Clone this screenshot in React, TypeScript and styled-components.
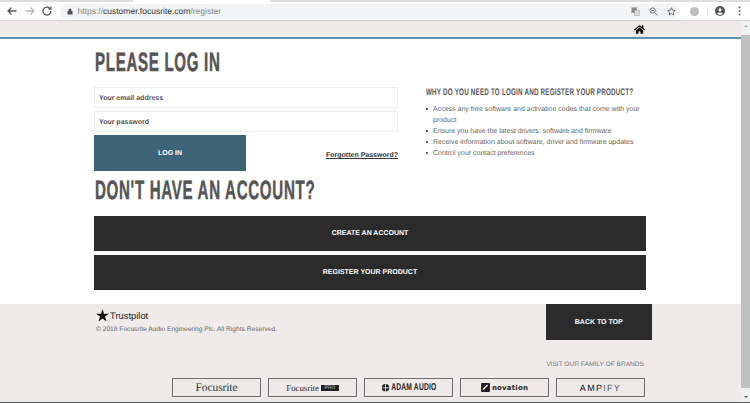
import styled, { createGlobalStyle } from "styled-components";
import { FaHome } from "react-icons/fa";

const Global = createGlobalStyle`
  html, body {
    margin: 0;
    padding: 0;
    overflow: hidden;
    background: #fff;
  }
`;

const Screen = styled.div`
  width: 750px;
  height: 403px;
  box-sizing: border-box;
  border-bottom: 1px solid #555;
  display: flex;
  flex-direction: column;
  overflow: hidden;
  font-family: "Liberation Sans", Arial, sans-serif;
  text-rendering: geometricPrecision;
  color: #555;
`;

const BrowserBar = styled.div`
  height: 18px;
  flex: none;
  position: relative;
  border-top: 2px solid #ddd;
  border-bottom: 1px solid #d6d3d3;
  background: #fff;
  display: flex;
  align-items: center;
  padding-left: 7px;
  &::before {
    content: "";
    position: absolute;
    left: 133px;
    top: -2px;
    width: 137px;
    height: 2px;
    background: #fff;
  }
`;

const NavIcon = styled.svg<{ $dim?: boolean }>`
  width: 10px;
  height: 10px;
  flex: none;
  margin-right: 7.5px;
  stroke: ${(p) => (p.$dim ? "#b5b5b5" : "#555")};
  fill: none;
  stroke-width: 1.3;
`;

const UrlPill = styled.div`
  flex: none;
  width: 620px;
  height: 15px;
  border-radius: 8px;
  background: #f1f3f4;
  display: flex;
  align-items: center;
  padding: 0 4px 0 7px;
  box-sizing: border-box;
  font-size: 8.5px;
  color: #333;
`;

const UrlText = styled.span`
  flex: 1;
  margin-left: 5px;
  span {
    color: #888;
  }
`;

const PillIcon = styled.svg`
  width: 9px;
  height: 9px;
  flex: none;
  margin-left: 9px;
  fill: none;
  stroke: #666;
  stroke-width: 1;
`;

const ToolIcons = styled.div`
  flex: 1;
  display: flex;
  align-items: center;
  padding-left: 10px;
`;

const Globe = styled.div`
  width: 9px;
  height: 9px;
  border-radius: 50%;
  background: #bdbdbd;
`;

const Separator = styled.div`
  width: 1px;
  height: 9px;
  margin-left: 8px;
  background: #e0e0e0;
`;

const Avatar = styled.svg`
  width: 10px;
  height: 10px;
  margin-left: 7px;
`;

const MenuDots = styled.svg`
  width: 3px;
  height: 10px;
  margin-left: 13px;
`;

const Body = styled.div`
  flex: 1;
  display: flex;
  min-height: 0;
`;

const Page = styled.div`
  flex: 1;
  display: flex;
  flex-direction: column;
  min-width: 0;
`;

const Scrollbar = styled.div`
  width: 9px;
  flex: none;
  background: #f1f1f1;
  display: flex;
  flex-direction: column;
  align-items: center;
  justify-content: space-between;
  padding: 4px 0 4px;
  box-sizing: border-box;
`;

const ScrollThumb = styled.div`
  width: 100%;
  height: 353px;
  background: #c1c1c1;
`;

const Arrow = styled.div<{ $down?: boolean }>`
  width: 0;
  height: 0;
  border-left: 2px solid transparent;
  border-right: 2px solid transparent;
  ${(p) => (p.$down ? "border-top: 2px solid #555;" : "border-bottom: 2px solid #aaa;")}
`;

const TopStrip = styled.div`
  height: 16px;
  flex: none;
  background: #efebea;
  border-bottom: 2px solid #5b93ad;
  display: flex;
  align-items: center;
  justify-content: flex-end;
  padding-right: 96px;
  color: #111;
`;

const Main = styled.main`
  flex: none;
  height: 265px;
  padding: 10px 95px 0 94px;
  box-sizing: border-box;
`;

const Title = styled.h1`
  margin: 0 0 0 1px;
  font-family: "Liberation Sans", Arial, sans-serif;
  font-size: 26.5px;
  line-height: 26px;
  font-weight: 700;
  letter-spacing: 1.2px;
  color: #555;
  white-space: nowrap;
  transform: scaleX(0.57);
  transform-origin: left center;
  -webkit-text-stroke: 0.5px #555;
`;

const LoginRow = styled.div`
  display: flex;
  margin-top: 12px;
`;

const LoginForm = styled.div`
  width: 304px;
  flex: none;
  display: flex;
  flex-direction: column;
  gap: 3px;
`;

const Field = styled.div`
  height: 21px;
  box-sizing: border-box;
  border: 1px solid #f0eeee;
  padding: 1px 0 0 4px;
  display: flex;
  align-items: center;
  font-size: 7px;
  font-weight: 700;
  color: #555;
`;

const LoginActions = styled.div`
  display: flex;
  justify-content: space-between;
  align-items: flex-end;
`;

const LoginButton = styled.div`
  width: 152px;
  height: 36px;
  background: #3e6478;
  color: #fff;
  font-size: 7px;
  font-weight: 700;
  display: flex;
  align-items: center;
  justify-content: center;
  box-sizing: border-box;
`;

const ForgotLink = styled.a`
  font-size: 7px;
  font-weight: 700;
  color: #333;
  text-decoration: underline;
  margin-bottom: 12px;
`;

const WhyBox = styled.section`
  flex: 1;
  padding: 0 0 0 28px;
  min-width: 0;
`;

const WhyTitle = styled.h3`
  margin: 0;
  font-family: "Liberation Sans", Arial, sans-serif;
  font-size: 9.5px;
  line-height: 12px;
  font-weight: 700;
  letter-spacing: 0.3px;
  color: #555;
  white-space: nowrap;
  transform: scaleX(0.66);
  transform-origin: left center;
`;

const WhyList = styled.ul`
  margin: 5px 0 0;
  padding: 0;
  list-style: none;
  font-size: 7px;
  line-height: 11px;
  color: #666;
`;

const WhyItem = styled.li`
  position: relative;
  padding-left: 7px;
  &::before {
    content: "";
    position: absolute;
    left: 0;
    top: 4px;
    width: 2px;
    height: 2px;
    background: #666;
  }
`;

const SecondTitle = styled(Title)`
  margin-top: 6px;
`;

const WideButton = styled.div`
  width: 552px;
  height: 35px;
  margin-top: 4px;
  background: #2b2b2b;
  color: #fff;
  font-size: 7px;
  font-weight: 700;
  display: flex;
  align-items: center;
  justify-content: center;
`;

const FirstWide = styled(WideButton)`
  margin-top: 13px;
`;

const Footer = styled.footer`
  flex: 1;
  background: #efebea;
  padding-left: 96px;
`;

const FooterTop = styled.div`
  display: flex;
  justify-content: space-between;
  padding-right: 89.5px;
`;

const Legal = styled.div`
  padding-top: 4px;
`;

const Trustpilot = styled.div`
  display: flex;
  align-items: center;
  gap: 1px;
  font-size: 9.4px;
  color: #222;
  height: 14px;
`;

const Copyright = styled.div`
  margin-top: 4px;
  font-size: 6.65px;
  color: #666;
`;

const BackToTop = styled.div`
  width: 105.5px;
  height: 36px;
  padding-top: 1px;
  box-sizing: border-box;
  background: #2b2b2b;
  color: #fff;
  font-size: 7px;
  font-weight: 700;
  display: flex;
  align-items: center;
  justify-content: center;
`;

const VisitLine = styled.div`
  margin-top: 21px;
  padding-right: 97px;
  text-align: right;
  font-size: 6.6px;
  line-height: 8px;
  color: #777;
`;

const BrandRow = styled.div`
  display: flex;
  gap: 7px;
  margin: 9px 0 0 76px;
`;

const BrandBox = styled.div`
  width: 89px;
  height: 19px;
  box-sizing: border-box;
  border: 1px solid #6e6e6e;
  display: flex;
  align-items: center;
  justify-content: center;
  gap: 2px;
  color: #333;
`;

const SerifLogo = styled.span<{ $size: number }>`
  font-family: "Liberation Serif", serif;
  font-size: ${(p) => p.$size}px;
  letter-spacing: -0.1px;
`;

const ProTag = styled.span`
  background: #222;
  color: #bbb;
  font-size: 5px;
  line-height: 6px;
  padding: 0 3.5px;
  font-family: "Liberation Sans", sans-serif;
`;

const AdamLogo = styled.span`
  display: inline-block;
  font-weight: 700;
  font-size: 10px;
  letter-spacing: 0.3px;
  color: #222;
  white-space: nowrap;
  margin: 0 -11.5px;
  transform: scaleX(0.67);
`;

const NovationLogo = styled.span`
  font-family: "DejaVu Sans", sans-serif;
  font-weight: 700;
  font-size: 7px;
  letter-spacing: 0.2px;
  color: #222;
`;

const AmpifyLogo = styled.span`
  font-size: 9px;
  letter-spacing: 1.3px;
  color: #555;
  b {
    color: #111;
    font-weight: 400;
  }
`;

export default function App() {
  return (
    <>
      <Global />
      <Screen>
        <BrowserBar>
          <NavIcon viewBox="0 0 10 10">
            <path d="M9.5 5H1M4.5 1.5 1 5l3.5 3.5" />
          </NavIcon>
          <NavIcon $dim viewBox="0 0 10 10">
            <path d="M.5 5H9M5.5 1.5 9 5 5.5 8.5" />
          </NavIcon>
          <NavIcon viewBox="0 0 10 10">
            <path d="M9 5a4 4 0 1 1-1.2-2.8M9 .5V3H6.5" />
          </NavIcon>
          <UrlPill>
            <svg width="6" height="7" viewBox="0 0 6 7">
              <path d="M1.5 3V2a1.5 1.5 0 0 1 3 0v1H5.5v3.5h-5V3z" fill="#555" />
            </svg>
            <UrlText>
              <span>https://</span>customer.focusrite.com<span>/register</span>
            </UrlText>
            <PillIcon viewBox="0 0 10 10">
              <rect x="0.5" y="0.5" width="6" height="6" fill="#888" stroke="none" />
              <rect x="4" y="3.5" width="5.5" height="6" fill="#ddd" stroke="#999" strokeWidth="0.5" />
            </PillIcon>
            <PillIcon viewBox="0 0 10 10">
              <circle cx="4" cy="4" r="3" />
              <path d="M6.3 6.3 9.5 9.5M2.5 4h3" />
            </PillIcon>
            <PillIcon viewBox="0 0 10 10">
              <path d="M5 .8 6.2 3.6l3 .3-2.3 2 .7 3L5 7.3 2.4 8.9l.7-3-2.3-2 3-.3z" />
            </PillIcon>
          </UrlPill>
          <ToolIcons>
            <Globe />
            <Separator />
            <Avatar viewBox="0 0 10 10">
              <circle cx="5" cy="5" r="5" fill="#555" />
              <circle cx="5" cy="3.8" r="1.6" fill="#fff" />
              <path d="M2 7.6c1-1.5 5-1.5 6 0a4 4 0 0 1-6 0z" fill="#fff" />
            </Avatar>
            <MenuDots viewBox="0 0 3 10">
              <circle cx="1.5" cy="1.5" r="1" fill="#666" />
              <circle cx="1.5" cy="5" r="1" fill="#666" />
              <circle cx="1.5" cy="8.5" r="1" fill="#666" />
            </MenuDots>
          </ToolIcons>
        </BrowserBar>
        <Body>
          <Page>
            <TopStrip>
              <FaHome size={11} />
            </TopStrip>
            <Main>
              <Title>PLEASE LOG IN</Title>
              <LoginRow>
                <LoginForm>
                  <Field>Your email address</Field>
                  <Field>Your password</Field>
                  <LoginActions>
                    <LoginButton>LOG IN</LoginButton>
                    <ForgotLink>Forgotten Password?</ForgotLink>
                  </LoginActions>
                </LoginForm>
                <WhyBox>
                  <WhyTitle>WHY DO YOU NEED TO LOGIN AND REGISTER YOUR PRODUCT?</WhyTitle>
                  <WhyList>
                    <WhyItem>Access any free software and activation codes that come with your product</WhyItem>
                    <WhyItem>Ensure you have the latest drivers, software and firmware</WhyItem>
                    <WhyItem>Receive information about software, driver and firmware updates</WhyItem>
                    <WhyItem>Control your contact preferences</WhyItem>
                  </WhyList>
                </WhyBox>
              </LoginRow>
              <SecondTitle>DON'T HAVE AN ACCOUNT?</SecondTitle>
              <FirstWide>CREATE AN ACCOUNT</FirstWide>
              <WideButton>REGISTER YOUR PRODUCT</WideButton>
            </Main>
            <Footer>
              <FooterTop>
                <Legal>
                  <Trustpilot>
                    <svg width="13" height="13" viewBox="0 0 13 13">
                      <path d="M6.5 0 8 4.7h5L9 7.6l1.5 4.9-4-3-4 3L4 7.6 0 4.7h5z" fill="#111" />
                    </svg>
                    Trustpilot
                  </Trustpilot>
                  <Copyright>© 2018 Focusrite Audio Engineering Plc. All Rights Reserved.</Copyright>
                </Legal>
                <BackToTop>BACK TO TOP</BackToTop>
              </FooterTop>
              <VisitLine>VISIT OUR FAMILY OF BRANDS</VisitLine>
              <BrandRow>
                <BrandBox>
                  <SerifLogo $size={11.5}>Focusrite</SerifLogo>
                </BrandBox>
                <BrandBox>
                  <SerifLogo $size={9}>Focusrite</SerifLogo>
                  <ProTag>PRO</ProTag>
                </BrandBox>
                <BrandBox>
                  <svg width="9" height="9" viewBox="0 0 9 9">
                    <circle cx="4.5" cy="4.8" r="3.8" fill="#222" />
                    <path d="M0 4.8h9M4.5 1v8" stroke="#efebea" strokeWidth="0.8" />
                  </svg>
                  <AdamLogo>ADAM AUDIO</AdamLogo>
                </BrandBox>
                <BrandBox>
                  <svg width="9" height="9" viewBox="0 0 9 9">
                    <rect width="9" height="9" rx="1" fill="#222" />
                    <path d="M2 6.5 6.5 2" stroke="#efebea" strokeWidth="1.6" />
                  </svg>
                  <NovationLogo>novation</NovationLogo>
                </BrandBox>
                <BrandBox>
                  <AmpifyLogo>
                    <b>AMP</b>IFY
                  </AmpifyLogo>
                </BrandBox>
              </BrandRow>
            </Footer>
          </Page>
          <Scrollbar>
            <Arrow />
            <ScrollThumb />
            <Arrow $down />
          </Scrollbar>
        </Body>
      </Screen>
    </>
  );
}
